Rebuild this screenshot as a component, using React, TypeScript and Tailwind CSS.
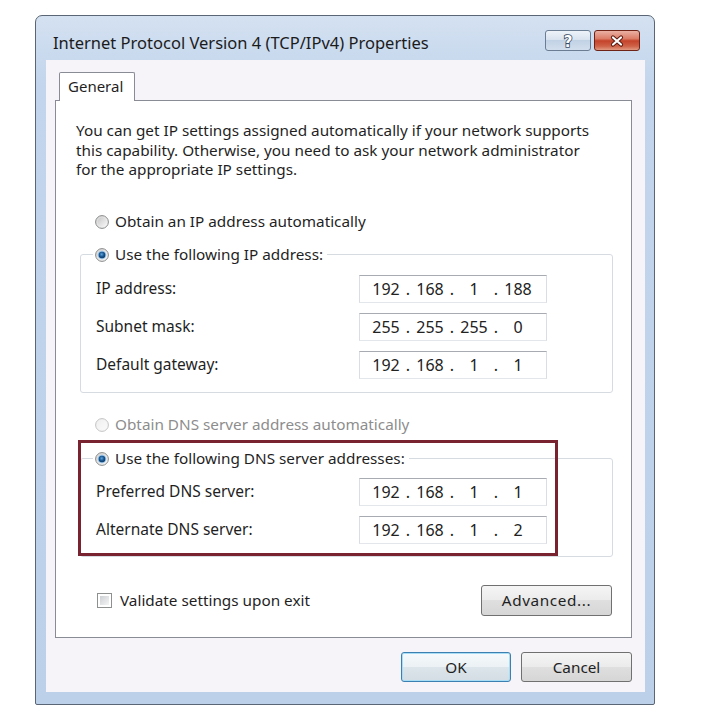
import React, { Fragment, useId } from "react";

function Radio({ checked = false, disabled = false }: { checked?: boolean; disabled?: boolean }) {
  const id = useId().replace(/:/g, "");
  return (
    <svg width="14" height="14" viewBox="0 0 14 14" className="shrink-0">
      <defs>
        <linearGradient id={`o${id}`} x1="0" y1="0" x2="1" y2="1">
          <stop offset="0" stopColor={disabled ? "#eeeeee" : "#d2d2d2"} />
          <stop offset="1" stopColor={disabled ? "#fbfbfb" : "#fafafa"} />
        </linearGradient>
        <linearGradient id={`i${id}`} x1="0" y1="0" x2="1" y2="1">
          <stop offset="0" stopColor={disabled ? "#f0f0f0" : "#c9c9c9"} />
          <stop offset="1" stopColor={disabled ? "#fafafa" : "#f6f6f6"} />
        </linearGradient>
        <radialGradient id={`d${id}`} cx="0.45" cy="0.4" r="0.6">
          <stop offset="0" stopColor="#5fa6de" />
          <stop offset="0.55" stopColor="#1c5a95" />
          <stop offset="1" stopColor="#0b3866" />
        </radialGradient>
      </defs>
      <circle cx="7" cy="7" r="6.4" fill={`url(#o${id})`} stroke={disabled ? "#c4c4c4" : "#8a8b8c"} strokeWidth="1" />
      <circle cx="7" cy="7" r="4.4" fill={`url(#i${id})`} />
      {checked && (
        <>
          <circle cx="7" cy="7" r="4.3" fill="#9cc6ea" />
          <circle cx="7" cy="7" r="3.3" fill={`url(#d${id})`} />
        </>
      )}
    </svg>
  );
}

function IpBox({ parts }: { parts: string[] }) {
  return (
    <div className="w-[188px] h-[28px] bg-white border border-t-[#a9abb2] border-x-[#dadde3] border-b-[#e3e7ec] flex items-center pl-[8px] text-[16px] text-[#222222]">
      {parts.map((p, i) => (
        <Fragment key={i}>
          {i > 0 && <span className="w-[8px] text-center">.</span>}
          <span className="w-[36px] text-center">{p}</span>
        </Fragment>
      ))}
    </div>
  );
}

function Row({ label, parts }: { label: string; parts: string[] }) {
  return (
    <div className="flex items-center h-[28px]">
      <span className="w-[263px] text-[15.5px] text-[#1f1f1f]">{label}</span>
      <IpBox parts={parts} />
    </div>
  );
}

const btn =
  "h-[30px] rounded-[3px] border border-[#707070] bg-[linear-gradient(to_bottom,#f5f5f5_0%,#ebebeb_50%,#dfdfdf_50%,#d6d6d6_100%)] text-[15.3px] text-[#1f1f1f] flex items-center justify-center";

export default function App() {
  return (
    <div className="w-[705px] h-[717px] bg-white pt-[15px] pl-[35px] font-['Noto_Sans',sans-serif]">
      <div className="w-[620px] h-[690px] border border-[#5a6675] rounded-t-[7px] rounded-b-[2px] bg-[linear-gradient(to_bottom,#d4e1f1_0%,#c2d5ec_10%,#bcd0ea_100%)] flex flex-col">
        {/* Title bar */}
        <div className="h-[44px] flex justify-between items-start pl-[17px] pr-[14px]">
          <div className="pt-[16px] leading-[22px] text-[16.5px] text-[#1b1b1b] whitespace-nowrap">
            Internet Protocol Version 4 (TCP/IPv4) Properties
          </div>
          <div className="pt-[14px] flex gap-[3px]">
            <div className="w-[46px] h-[21px] rounded-[3px] border border-[#6b7d93] bg-[linear-gradient(to_bottom,#eef3f9_0%,#d9e3ef_45%,#c2d2e5_50%,#d2deec_100%)] flex items-center justify-center">
              <svg width="16" height="18" viewBox="0 0 16 18">
                <text
                  x="8"
                  y="14.5"
                  textAnchor="middle"
                  fontSize="15"
                  fontWeight="700"
                  fontFamily="DejaVu Sans, sans-serif"
                  fill="#ffffff"
                  stroke="#3b4c61"
                  strokeWidth="1.6"
                  paintOrder="stroke"
                >
                  ?
                </text>
              </svg>
            </div>
            <div className="w-[46px] h-[21px] rounded-[3px] border border-[#6e2316] bg-[linear-gradient(to_bottom,#eab1a4_0%,#dc7d68_40%,#c4432a_52%,#cf6248_80%,#e09a82_100%)] flex items-center justify-center">
              <svg width="18" height="14" viewBox="0 0 18 14">
                <path d="M5 3.5 L13 10.5 M13 3.5 L5 10.5" stroke="#5a1a10" strokeWidth="4.2" strokeLinecap="round" />
                <path d="M5 3.5 L13 10.5 M13 3.5 L5 10.5" stroke="#ffffff" strokeWidth="2.2" strokeLinecap="round" />
              </svg>
            </div>
          </div>
        </div>

        {/* Client area */}
        <div className="ml-[10px] mr-[9px] h-[632px] bg-[#f6f4f8] flex flex-col pl-[9px] pr-[13px] pt-[12px]">
          {/* Tab header */}
          <div className="flex">
            <div className="ml-[4px] w-[76px] h-[29px] -mb-px relative z-10 bg-white border border-b-0 border-[#898c95] rounded-t-[2px] pl-[8px] pt-[3px] leading-[20px] text-[15px] text-[#1f1f1f]">
              General
            </div>
          </div>

          {/* Tab panel */}
          <div className="relative h-[538px] border border-[#898c95] bg-white pl-[20px] pt-[20px] text-[15.3px] text-[#1f1f1f]">
            <p className="leading-[19.5px] whitespace-nowrap">
              You can get IP settings assigned automatically if your network supports
              <br />
              this capability. Otherwise, you need to ask your network administrator
              <br />
              for the appropriate IP settings.
            </p>

            <div className="mt-[32px] ml-[19px] h-[20px] flex items-center gap-[6px]">
              <Radio />
              <span>Obtain an IP address automatically</span>
            </div>

            <fieldset className="mt-[13px] ml-[4px] w-[533px] border border-[#d5dbe1] rounded-[3px] pl-[15px] pb-[13px]">
              <legend className="-ml-[3px] pl-[2px] pr-[4px]">
                <span className="h-[20px] flex items-center gap-[6px]">
                  <Radio checked />
                  <span>Use the following IP address:</span>
                </span>
              </legend>
              <div className="pt-[10px] flex flex-col gap-[10px]">
                <Row label="IP address:" parts={["192", "168", "1", "188"]} />
                <Row label="Subnet mask:" parts={["255", "255", "255", "0"]} />
                <Row label="Default gateway:" parts={["192", "168", "1", "1"]} />
              </div>
            </fieldset>

            <div className="mt-[22px] ml-[19px] h-[20px] flex items-center gap-[6px] text-[#8d8d8d]">
              <Radio disabled />
              <span>Obtain DNS server address automatically</span>
            </div>

            <fieldset className="mt-[14px] ml-[4px] w-[533px] border border-[#d5dbe1] rounded-[3px] pl-[15px] pb-[12px]">
              <legend className="-ml-[3px] pl-[2px] pr-[4px]">
                <span className="h-[20px] flex items-center gap-[6px]">
                  <Radio checked />
                  <span>Use the following DNS server addresses:</span>
                </span>
              </legend>
              <div className="pt-[9px] flex flex-col gap-[10px]">
                <Row label="Preferred DNS server:" parts={["192", "168", "1", "1"]} />
                <Row label="Alternate DNS server:" parts={["192", "168", "1", "2"]} />
              </div>
            </fieldset>

            <div className="mt-[28px] ml-[4px] w-[533px] flex items-center justify-between">
              <div className="ml-[17px] flex items-center gap-[8px]">
                <div className="w-[15px] h-[15px] border border-[#8e8f8f] bg-white p-[2px]">
                  <div className="w-full h-full bg-[linear-gradient(135deg,#cdd0d4,#f5f5f5)]" />
                </div>
                <span>Validate settings upon exit</span>
              </div>
              <div className={`${btn} w-[131px] h-[31px] mr-[1px] tracking-[0.6px]`}>Advanced...</div>
            </div>

            {/* highlight annotation */}
            <div className="absolute left-[22px] top-[339px] w-[480px] h-[116px] border-[3px] border-[#7a2330] pointer-events-none" />
          </div>

          {/* Dialog buttons */}
          <div className="mt-[14px] flex justify-end gap-[10px]">
            <div className="w-[110px] h-[30px] rounded-[3px] border border-[#3c7fb1] shadow-[inset_0_0_0_1px_#a8def5] bg-[linear-gradient(to_bottom,#f6fafc_0%,#ebf1f4_50%,#dce5ea_50%,#d3dde3_100%)] text-[15.3px] text-[#1f1f1f] flex items-center justify-center">
              OK
            </div>
            <div className={`${btn} w-[111px]`}>Cancel</div>
          </div>
        </div>
      </div>
    </div>
  );
}
